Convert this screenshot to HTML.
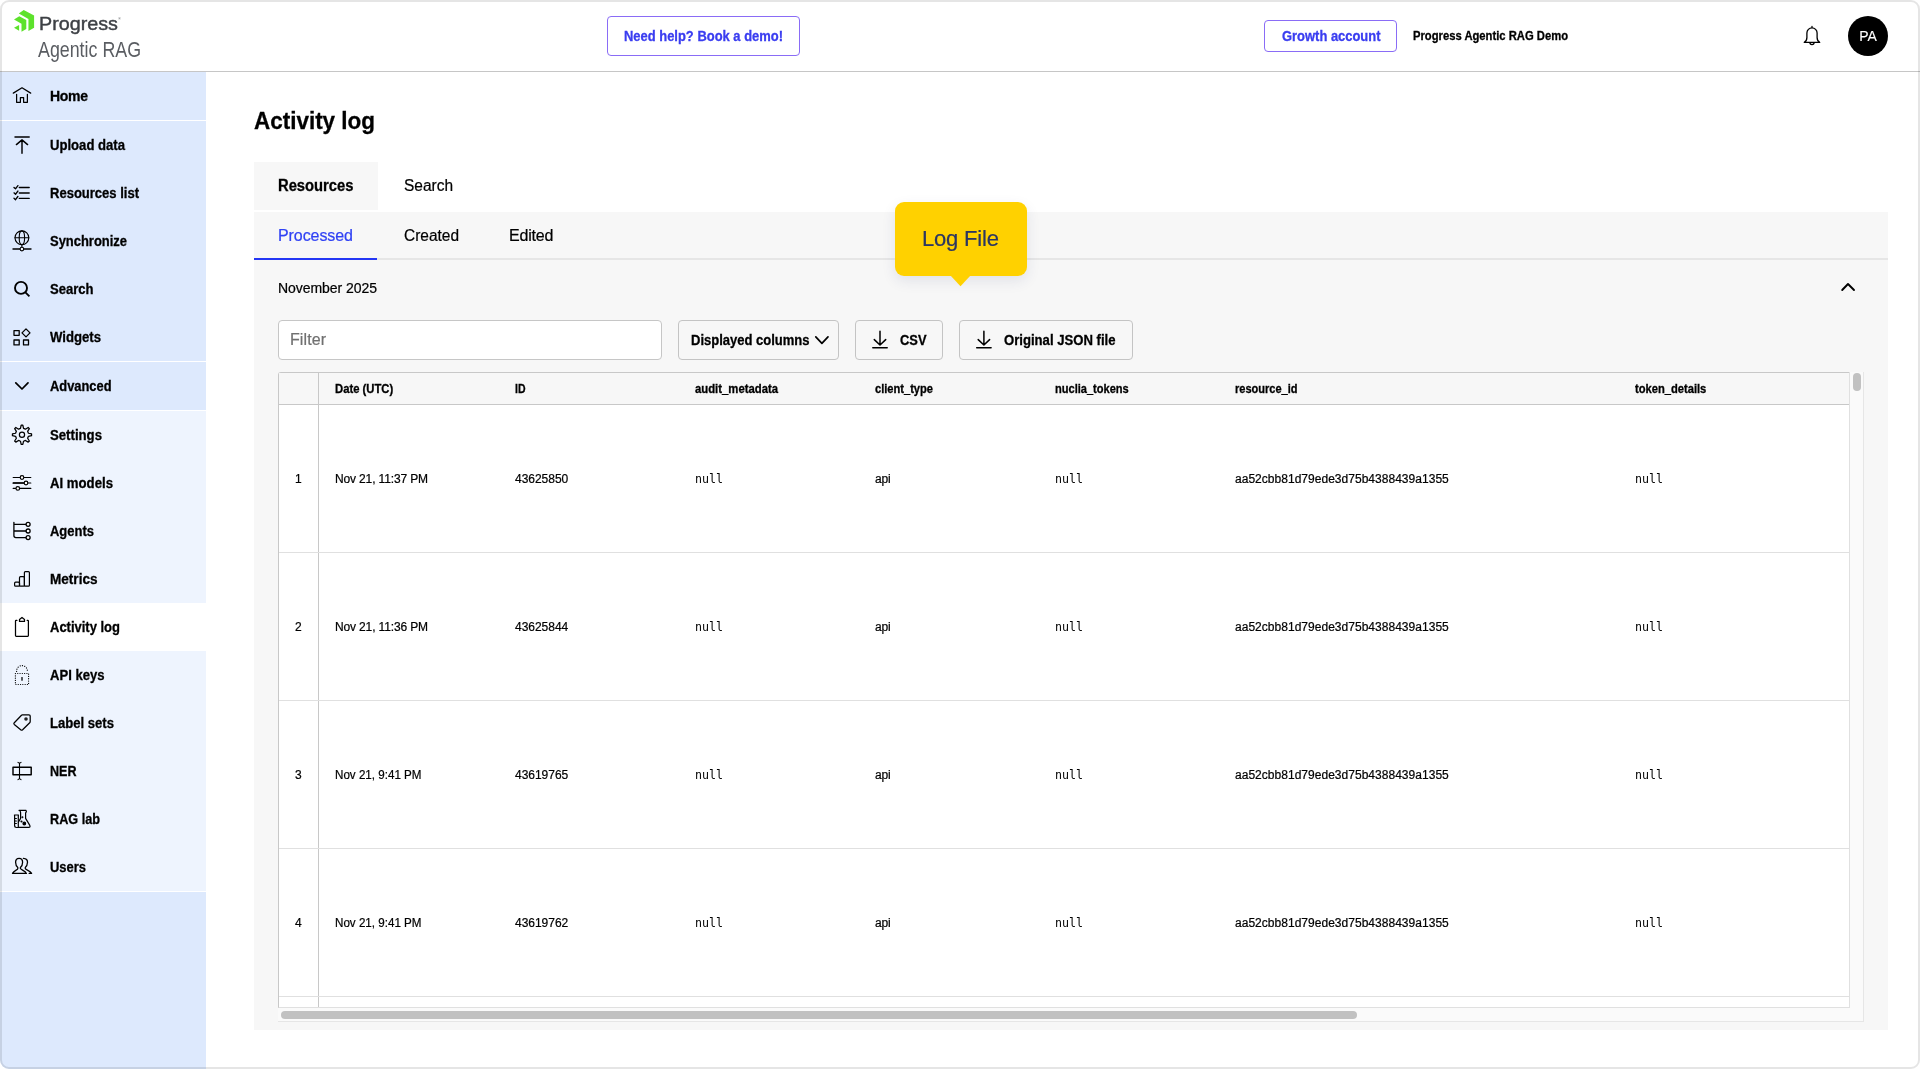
<!DOCTYPE html>
<html lang="en"><head><meta charset="utf-8"><title>Activity log</title>
<style>
*{box-sizing:border-box;margin:0;padding:0}
html,body{width:1920px;height:1069px;overflow:hidden;background:#fff}
body{position:relative;font-family:"Liberation Sans",sans-serif;color:#000}
.a{position:absolute}
#texts{position:absolute;left:0;top:0;width:1920px;height:1069px;will-change:transform}
.t{position:absolute;white-space:nowrap;line-height:20px;height:20px;transform-origin:0 50%}
#app{position:absolute;left:0;top:0;width:1920px;height:1069px;border-radius:9px;overflow:hidden;background:#fff}
#frame{position:absolute;left:0;top:0;width:1920px;height:1069px;border:2px solid rgba(0,0,0,.10);border-radius:9px;pointer-events:none}
#hdr{left:0;top:0;width:1920px;height:72px;background:#fff;border-bottom:1px solid #c6c6c6}
#side{left:0;top:72px;width:206px;height:997px;background:#dde9fd}
.si{position:absolute;left:0;width:206px;height:48px}
.ic{position:absolute;left:10px;width:24px;height:24px}
.btn{position:absolute;border:1px solid #c4c4c4;border-radius:4px}
svg{display:block;overflow:visible}

</style></head>
<body>
<div id="app">
<div id="hdr" class="a"></div>
<div class="a" style="left:607px;top:16px;width:193px;height:40px;border:1px solid #8a6cf6;border-radius:4px"></div>
<div class="a" style="left:1264px;top:20px;width:133px;height:32px;border:1px solid #8a6cf6;border-radius:4px"></div>
<div class="a" style="left:1848px;top:16px;width:40px;height:40px;border-radius:50%;background:#000"></div>
<div id="side" class="a">
  <div class="a" style="left:0;top:48px;width:206px;height:1px;background:#fff"></div>
  <div class="a" style="left:0;top:289px;width:206px;height:1px;background:#fff"></div>
  <div class="a" style="left:0;top:338px;width:206px;height:482px;background:#fff"></div>
  <div class="a" style="left:0;top:339px;width:206px;height:480px;background:#eef4fe"></div>
  <div class="a" style="left:0;top:531px;width:206px;height:48px;background:#fff"></div>
</div>
<!-- main -->
<div class="a" style="left:254px;top:162px;width:124px;height:48px;background:#f7f7f7"></div>
<div class="a" style="left:254px;top:212px;width:1634px;height:818px;background:#f7f7f7"></div>
<div class="a" style="left:254px;top:258px;width:1634px;height:2px;background:#e6e6e6"></div>
<div class="a" style="left:254px;top:258px;width:123px;height:2px;background:#2436f4"></div>
<!-- filter -->
<div class="a" style="left:278px;top:320px;width:384px;height:40px;background:#fff;border:1px solid #c6c6c6;border-radius:4px"></div>
<div class="btn" style="left:678px;top:320px;width:161px;height:40px"></div>
<div class="btn" style="left:855px;top:320px;width:88px;height:40px"></div>
<div class="btn" style="left:959px;top:320px;width:174px;height:40px"></div>
<!-- scroll container -->
<div class="a" style="left:278px;top:372px;width:1586px;height:650px;background:#fafafa;border-right:1px solid #e6e6e6;border-bottom:1px solid #e6e6e6"></div>
<div class="a" style="left:278px;top:372px;width:1572px;height:636px;background:#fff;border:1px solid #c8c8c8;border-radius:3px 0 0 0;border-bottom-color:#e0e0e0;border-right-color:#e0e0e0"></div>
<div class="a" style="left:279px;top:373px;width:1570px;height:31px;background:#f7f7f7"></div>
<div class="a" style="left:279px;top:404px;width:1570px;height:1px;background:#c8c8c8"></div>
<div class="a" style="left:318px;top:373px;width:1px;height:634px;background:#c8c8c8"></div>
<div class="a" style="left:279px;top:552px;width:1570px;height:1px;background:#e0e0e0"></div>
<div class="a" style="left:279px;top:700px;width:1570px;height:1px;background:#e0e0e0"></div>
<div class="a" style="left:279px;top:848px;width:1570px;height:1px;background:#e0e0e0"></div>
<div class="a" style="left:279px;top:996px;width:1570px;height:1px;background:#e0e0e0"></div>
<!-- scrollbars -->
<div class="a" style="left:1853px;top:373px;width:8px;height:18px;border-radius:4px;background:#c1c1c1"></div>
<div class="a" style="left:281px;top:1011px;width:1076px;height:8px;border-radius:4px;background:#c1c1c1"></div>
<!-- tooltip -->
<div class="a" style="left:895px;top:202px;width:132px;height:74px;border-radius:9px;background:#ffd100;box-shadow:0 5px 14px rgba(40,50,110,.10)"></div>
<svg class="a" style="left:950px;top:275px" width="22" height="12" viewBox="0 0 22 12"><path d="M0 0H21L10.5 11.2Z" fill="#ffd100"/></svg>
<svg class="a" style="left:0;top:0" width="1920" height="1069" viewBox="0 0 1920 1069">
<path fill="#5de22c" d="M18.8 13.4L23.7 9.9L34.1 15.6V27.85L28.45 30.9V18.9Z"/>
<path fill="#5de22c" d="M14 19.4L19.25 16.15L26.3 20.1V29.1L21.5 31.75V23.65Z"/>
<path fill="#5de22c" d="M14 27.85L19.1 25V30.8Z"/>
<path stroke="#000" fill="none" stroke-linecap="round" stroke-linejoin="round" stroke-width="1.3" d="M1812 26.4V27.9M1804.3 42.4C1806.3 41.2 1806.9 39.6 1806.9 37.5V33C1806.9 30.2 1809.2 27.9 1812 27.9S1817.1 30.2 1817.1 33V37.5C1817.1 39.6 1817.7 41.2 1819.7 42.4ZM1809.9 42.6A2.1 2.1 0 0 0 1814.1 42.6"/>
<path stroke="#000" fill="none" stroke-linecap="round" stroke-linejoin="round" stroke-width="1.25" stroke-linecap="butt" d="M13.3 93.1L22 87.8L30.7 93.1M16.6 94.3V102.3H20.4V97.6H23.6V102.3H27.4V94.3"/>
<path stroke="#000" fill="none" stroke-linecap="round" stroke-linejoin="round" stroke-width="1.45" d="M15 137H29.2M22 153.2V140M16.4 144.6L22 139.9L27.6 144.6"/>
<path stroke="#000" fill="none" stroke-linecap="round" stroke-linejoin="round" stroke-width="1.35" stroke-linecap="butt" d="M19.3 187.50H29.2M14 187.40L15.5 188.80L17.9 185.60"/>
<path stroke="#000" fill="none" stroke-linecap="round" stroke-linejoin="round" stroke-width="1.35" stroke-linecap="butt" d="M19.3 192.95H29.2M14 192.85L15.5 194.25L17.9 191.05"/>
<path stroke="#000" fill="none" stroke-linecap="round" stroke-linejoin="round" stroke-width="1.35" stroke-linecap="butt" d="M19.3 198.40H29.2M14 198.30L15.5 199.70L17.9 196.50"/>
<g stroke="#000" fill="none" stroke-linecap="round" stroke-linejoin="round" stroke-width="1.15"><circle cx="21.9" cy="237.7" r="6.9"/><ellipse cx="21.9" cy="237.7" rx="2.7" ry="6.9"/><path d="M15 237.7H28.8M21.9 244.6V246.8"/><path stroke-width="1.4" d="M13 249H20M23.8 249H31"/><circle cx="21.9" cy="249" r="1.8" fill="#f4f8ff"/></g>
<g stroke="#000" fill="none" stroke-linecap="round" stroke-linejoin="round" stroke-width="1.9"><circle cx="21" cy="287.9" r="6"/><path stroke-linecap="butt" d="M25.4 292.3L29.4 296.3"/></g>
<g stroke="#000" fill="none" stroke-linecap="round" stroke-linejoin="round" stroke-width="1.3" stroke-linejoin="miter"><rect x="14" y="330.6" width="5.2" height="4.7"/><rect x="14" y="340" width="5.2" height="4.9"/><rect x="23.5" y="340" width="5" height="4.9"/><path d="M26 328.9L30 332.9L26 336.9L22 332.9Z"/></g>
<path stroke="#000" fill="none" stroke-linecap="round" stroke-linejoin="round" stroke-width="1.75" stroke-linecap="butt" stroke-linejoin="miter" d="M15.8 382.9L22 389L28 382.9"/>
<path stroke="#000" fill="none" stroke-linecap="round" stroke-linejoin="round" stroke-width="1.25" d="M21.17 425.24 L22.83 425.24 L23.54 428.38 L25.45 429.17 L28.18 427.45 L29.35 428.62 L27.63 431.35 L28.42 433.26 L31.56 433.97 L31.56 435.63 L28.42 436.34 L27.63 438.25 L29.35 440.98 L28.18 442.15 L25.45 440.43 L23.54 441.22 L22.83 444.36 L21.17 444.36 L20.46 441.22 L18.55 440.43 L15.82 442.15 L14.65 440.98 L16.37 438.25 L15.58 436.34 L12.44 435.63 L12.44 433.97 L15.58 433.26 L16.37 431.35 L14.65 428.62 L15.82 427.45 L18.55 429.17 L20.46 428.38Z"/><circle stroke="#000" fill="none" stroke-linecap="round" stroke-linejoin="round" stroke-width="1.2" cx="22" cy="434.8" r="2.6"/>
<g stroke="#000" fill="none" stroke-linecap="round" stroke-linejoin="round" stroke-width="1.2"><path d="M13.2 477.5H19.9M24.1 477.5H30.8M13.2 483H23.9M28.1 483H30.8M13.2 488.4H15.7M19.9 488.4H30.8"/><path stroke-width="1.7" d="M13.4 483H23.5"/><circle cx="22" cy="477.5" r="1.8" fill="#fff"/><circle cx="26" cy="483" r="1.8" fill="#fff"/><circle cx="17.8" cy="488.4" r="1.8" fill="#fff"/></g>
<g stroke="#000" fill="none" stroke-linecap="round" stroke-linejoin="round" stroke-width="1.3"><path d="M13.9 522.3V535.6Q13.9 537.6 15.9 537.6H26M13.9 524.3H26M13.9 531H26"/><circle cx="28.1" cy="524.3" r="2" fill="#fff"/><circle cx="28.1" cy="531" r="2" fill="#fff"/><circle cx="28.1" cy="537.6" r="2" fill="#fff"/></g>
<g stroke="#000" fill="none" stroke-linecap="round" stroke-linejoin="round" stroke-width="1.2"><rect x="14.6" y="582.2" width="4.9" height="4" rx="1"/><rect x="19.5" y="576.7" width="4.9" height="9.5" rx="1"/><rect x="24.4" y="571.6" width="5" height="14.6" rx="1"/></g>
<g stroke="#000" fill="none" stroke-linecap="round" stroke-linejoin="round" stroke-width="1.25"><path d="M16.9 620.4H16.2Q15.5 620.4 15.5 621.1V635.6Q15.5 636.3 16.2 636.3H27.7Q28.4 636.3 28.4 635.6V621.1Q28.4 620.4 27.7 620.4H27.2"/><path d="M19.5 621.4V619.4L22 617.5L24.5 619.4V621.4Z"/></g>
<g stroke="#000" fill="none" stroke-linecap="round" stroke-linejoin="round" stroke-width="1.2" stroke-dasharray="0.1 2.2"><rect x="15.4" y="673.5" width="13.2" height="11"/><path d="M16.6 671.5V671A5.4 5.4 0 0 1 27.4 671V671.5"/></g><path stroke="#000" fill="none" stroke-linecap="round" stroke-linejoin="round" stroke-width="1.3" d="M22 677.6V680.2"/>
<path stroke="#000" fill="none" stroke-linecap="round" stroke-linejoin="round" stroke-width="1.25" d="M22.3 714.8H28.9Q30.2 714.8 30.2 716.1V721.6Q30.2 722.3 29.7 722.8L22.6 729.8Q21.7 730.6 20.7 729.8L14.3 724.4Q13.4 723.6 14.3 722.7L21.5 715.2Q21.9 714.8 22.3 714.8Z"/><circle cx="26" cy="719" r="1.8" fill="#222"/>
<g stroke="#000" fill="none" stroke-linecap="round" stroke-linejoin="round" stroke-width="1.45" stroke-linejoin="miter"><rect x="13" y="767.3" width="18.2" height="7.4"/><path stroke-width="1.1" d="M19.5 763.2V778.8M18 762.4L19.5 763.4L21 762.4M18 779.6L19.5 778.6L21 779.6"/></g>
<g stroke="#000" fill="none" stroke-linecap="round" stroke-linejoin="round" stroke-width="1.2"><path d="M14.4 815H18.5M14.6 815V825.6Q14.6 827.5 16.5 827.5H18.3V815M14.8 818.5H16.4M14.8 821H16.4M14.8 823.5H16.4"/><path d="M19 810.3H26Q27 811.5 25.6 813V818.4L29.8 825.4Q30.6 827.4 28.6 827.4H18.6M20 810.6L20.6 812.6V818.4L18.5 822"/><circle cx="24.3" cy="823.5" r="1.3" fill="#000"/><circle cx="21.5" cy="821.5" r=".5" fill="#000"/><circle cx="22.4" cy="817.3" r=".4" fill="#000"/></g>
<g stroke="#000" fill="none" stroke-linecap="round" stroke-linejoin="round" stroke-width="1.3"><path d="M19.1 858.3C16.9 858.3 15.6 860 15.6 862.3C15.6 864.8 16.5 866.4 17.8 867.4V868.6C17.6 870.2 14.2 870 12.5 873.4H26.4C25.2 870.6 21 870 20.4 868.6V867.4C21.7 866.4 22.6 864.8 22.6 862.3C22.6 860 21.3 858.3 19.1 858.3Z"/><path d="M23.4 858.3C26 858.5 27.6 860 27.5 862.3C27.4 864.8 26.6 866.4 25.3 867.4V868.6C25.9 870.2 30 870 31.6 873.4H29.2"/></g>
<path stroke="#000" fill="none" stroke-linecap="round" stroke-linejoin="round" stroke-width="1.9" stroke-linecap="butt" stroke-linejoin="miter" d="M1842.2 290L1848 284L1854 290"/>
<path stroke="#000" fill="none" stroke-linecap="round" stroke-linejoin="round" stroke-width="1.7" stroke-linecap="butt" stroke-linejoin="miter" d="M815.8 336.9L821.9 343.3L828 336.9"/>
<path stroke="#000" fill="none" stroke-linecap="round" stroke-linejoin="round" stroke-width="1.5" stroke-linecap="butt" stroke-linejoin="miter" d="M880 331.2V344.6M874.3 339.6L880 345L885.7 339.6M872.8 347.8H887.2"/>
<path stroke="#000" fill="none" stroke-linecap="round" stroke-linejoin="round" stroke-width="1.5" stroke-linecap="butt" stroke-linejoin="miter" d="M983.9 331.2V344.6M978.1999999999999 339.6L983.9 345L989.6 339.6M976.6999999999999 347.8H991.1"/>
</svg>
<div id="texts">
<header>
<span class="t" style='left:624px;top:26px;font-size:14px;font-weight:700;color:#3a3df0;-webkit-text-stroke:0.3px;transform:scaleX(0.9248);'>Need help? Book a demo!</span>
<span class="t" style='left:1282px;top:26px;font-size:14px;font-weight:700;color:#3a3df0;-webkit-text-stroke:0.3px;transform:scaleX(0.9243);'>Growth account</span>
<span class="t" style='left:1413px;top:26px;font-size:12px;font-weight:700;color:#000;-webkit-text-stroke:0.3px;transform:scaleX(0.9360);'>Progress Agentic RAG Demo</span>
<span class="t" style='left:1859.3px;top:26px;font-size:14px;font-weight:400;color:#fff;-webkit-text-stroke:0.1px;letter-spacing:-0.041px;'>PA</span>
<span class="t" style='left:118.2px;top:8.600000000000001px;font-size:3.4px;font-weight:400;color:#3d4045;-webkit-text-stroke:0;'>®</span>
<span class="t" style='left:39.3px;top:13.899999999999999px;font-size:18.2px;font-weight:400;color:#3d4045;-webkit-text-stroke:0.4px #3d4045;transform:scaleX(1.0854);'>Progress</span>
<span class="t" style='left:38px;top:40.0px;font-size:21.2px;font-weight:400;color:#5a5d62;-webkit-text-stroke:0;transform:scaleX(0.8409);'>Agentic RAG</span>
</header>
<nav>
<span class="t" style='left:50px;top:86px;font-size:14px;font-weight:700;color:#000;-webkit-text-stroke:0.3px;letter-spacing:-0.302px;'>Home</span>
<span class="t" style='left:50px;top:135px;font-size:14px;font-weight:700;color:#000;-webkit-text-stroke:0.3px;transform:scaleX(0.9360);'>Upload data</span>
<span class="t" style='left:50px;top:183px;font-size:14px;font-weight:700;color:#000;-webkit-text-stroke:0.3px;transform:scaleX(0.9298);'>Resources list</span>
<span class="t" style='left:50px;top:231px;font-size:14px;font-weight:700;color:#000;-webkit-text-stroke:0.3px;transform:scaleX(0.9249);'>Synchronize</span>
<span class="t" style='left:50px;top:279px;font-size:14px;font-weight:700;color:#000;-webkit-text-stroke:0.3px;transform:scaleX(0.9314);'>Search</span>
<span class="t" style='left:50px;top:327px;font-size:14px;font-weight:700;color:#000;-webkit-text-stroke:0.3px;transform:scaleX(0.9387);'>Widgets</span>
<span class="t" style='left:50px;top:376px;font-size:14px;font-weight:700;color:#000;-webkit-text-stroke:0.3px;transform:scaleX(0.9190);'>Advanced</span>
<span class="t" style='left:50px;top:425px;font-size:14px;font-weight:700;color:#000;-webkit-text-stroke:0.3px;transform:scaleX(0.9414);'>Settings</span>
<span class="t" style='left:50px;top:473px;font-size:14px;font-weight:700;color:#000;-webkit-text-stroke:0.3px;transform:scaleX(0.9416);'>AI models</span>
<span class="t" style='left:50px;top:521px;font-size:14px;font-weight:700;color:#000;-webkit-text-stroke:0.3px;transform:scaleX(0.9272);'>Agents</span>
<span class="t" style='left:50px;top:569px;font-size:14px;font-weight:700;color:#000;-webkit-text-stroke:0.3px;transform:scaleX(0.9688);'>Metrics</span>
<span class="t" style='left:50px;top:617px;font-size:14px;font-weight:700;color:#000;-webkit-text-stroke:0.3px;transform:scaleX(0.9275);'>Activity log</span>
<span class="t" style='left:50px;top:665px;font-size:14px;font-weight:700;color:#000;-webkit-text-stroke:0.3px;transform:scaleX(0.9336);'>API keys</span>
<span class="t" style='left:50px;top:713px;font-size:14px;font-weight:700;color:#000;-webkit-text-stroke:0.3px;transform:scaleX(0.9345);'>Label sets</span>
<span class="t" style='left:50px;top:761px;font-size:14px;font-weight:700;color:#000;-webkit-text-stroke:0.3px;transform:scaleX(0.8964);'>NER</span>
<span class="t" style='left:50px;top:809px;font-size:14px;font-weight:700;color:#000;-webkit-text-stroke:0.3px;transform:scaleX(0.9052);'>RAG lab</span>
<span class="t" style='left:50px;top:857px;font-size:14px;font-weight:700;color:#000;-webkit-text-stroke:0.3px;transform:scaleX(0.9249);'>Users</span>
</nav>
<main>
<span class="t" style='left:254px;top:111px;font-size:24px;font-weight:700;color:#000;-webkit-text-stroke:0.3px;transform:scaleX(0.9354);'>Activity log</span>
<span class="t" style='left:278px;top:176px;font-size:16px;font-weight:700;color:#000;-webkit-text-stroke:0.3px;transform:scaleX(0.9227);'>Resources</span>
<span class="t" style='left:404px;top:176px;font-size:16px;font-weight:400;color:#000;-webkit-text-stroke:0.22px;transform:scaleX(0.9664);'>Search</span>
<span class="t" style='left:278px;top:226px;font-size:16px;font-weight:400;color:#3042f4;-webkit-text-stroke:0.22px;letter-spacing:-0.074px;'>Processed</span>
<span class="t" style='left:404px;top:226px;font-size:16px;font-weight:400;color:#000;-webkit-text-stroke:0.22px;transform:scaleX(0.9662);'>Created</span>
<span class="t" style='left:509px;top:226px;font-size:16px;font-weight:400;color:#000;-webkit-text-stroke:0.22px;letter-spacing:-0.175px;'>Edited</span>
<span class="t" style='left:278px;top:278px;font-size:14px;font-weight:400;color:#000;-webkit-text-stroke:0.22px;letter-spacing:-0.052px;'>November 2025</span>
<span class="t" style='left:290px;top:330px;font-size:16px;font-weight:400;color:#707070;-webkit-text-stroke:0.22px;letter-spacing:0.087px;'>Filter</span>
<span class="t" style='left:691px;top:330px;font-size:14px;font-weight:700;color:#000;-webkit-text-stroke:0.3px;transform:scaleX(0.9287);'>Displayed columns</span>
<span class="t" style='left:900px;top:330px;font-size:14px;font-weight:700;color:#000;-webkit-text-stroke:0.3px;transform:scaleX(0.9202);'>CSV</span>
<span class="t" style='left:1004px;top:330px;font-size:14px;font-weight:700;color:#000;-webkit-text-stroke:0.3px;transform:scaleX(0.9367);'>Original JSON file</span>
<span class="t" style='left:922px;top:228.75px;font-size:22px;font-weight:400;color:#2b3662;-webkit-text-stroke:0.22px;letter-spacing:-0.183px;'>Log File</span>
</main>
<section>
<span class="t" style='left:335px;top:378.5px;font-size:12px;font-weight:700;color:#000;-webkit-text-stroke:0.3px;transform:scaleX(0.9395);'>Date (UTC)</span>
<span class="t" style='left:515px;top:378.5px;font-size:12px;font-weight:700;color:#000;-webkit-text-stroke:0.3px;transform:scaleX(0.8750);'>ID</span>
<span class="t" style='left:695px;top:378.5px;font-size:12px;font-weight:700;color:#000;-webkit-text-stroke:0.3px;transform:scaleX(0.9428);'>audit_metadata</span>
<span class="t" style='left:875px;top:378.5px;font-size:12px;font-weight:700;color:#000;-webkit-text-stroke:0.3px;transform:scaleX(0.9250);'>client_type</span>
<span class="t" style='left:1055px;top:378.5px;font-size:12px;font-weight:700;color:#000;-webkit-text-stroke:0.3px;transform:scaleX(0.9215);'>nuclia_tokens</span>
<span class="t" style='left:1235px;top:378.5px;font-size:12px;font-weight:700;color:#000;-webkit-text-stroke:0.3px;transform:scaleX(0.9185);'>resource_id</span>
<span class="t" style='left:1635px;top:378.5px;font-size:12px;font-weight:700;color:#000;-webkit-text-stroke:0.3px;transform:scaleX(0.9296);'>token_details</span>
<span class="t" style='left:295px;top:468.5px;font-size:12px;font-weight:400;color:#000;-webkit-text-stroke:0.22px;'>1</span>
<span class="t" style='left:335px;top:468.5px;font-size:12px;font-weight:400;color:#000;-webkit-text-stroke:0.22px;letter-spacing:-0.145px;'>Nov 21, 11:37 PM</span>
<span class="t" style='left:515px;top:468.5px;font-size:12px;font-weight:400;color:#000;-webkit-text-stroke:0.22px;letter-spacing:-0.020px;'>43625850</span>
<span class="t" style='left:695px;top:469.0px;font-size:12px;font-weight:400;color:#000;font-family:"DejaVu Sans Mono", "Liberation Mono", monospace;transform:scaleX(0.9686);'>null</span>
<span class="t" style='left:875px;top:468.5px;font-size:12px;font-weight:400;color:#000;-webkit-text-stroke:0.22px;letter-spacing:-0.133px;'>api</span>
<span class="t" style='left:1055px;top:469.0px;font-size:12px;font-weight:400;color:#000;font-family:"DejaVu Sans Mono", "Liberation Mono", monospace;transform:scaleX(0.9686);'>null</span>
<span class="t" style='left:1235px;top:468.5px;font-size:12px;font-weight:400;color:#000;-webkit-text-stroke:0.22px;letter-spacing:0.028px;'>aa52cbb81d79ede3d75b4388439a1355</span>
<span class="t" style='left:1635px;top:469.0px;font-size:12px;font-weight:400;color:#000;font-family:"DejaVu Sans Mono", "Liberation Mono", monospace;transform:scaleX(0.9686);'>null</span>
<span class="t" style='left:295px;top:616.5px;font-size:12px;font-weight:400;color:#000;-webkit-text-stroke:0.22px;'>2</span>
<span class="t" style='left:335px;top:616.5px;font-size:12px;font-weight:400;color:#000;-webkit-text-stroke:0.22px;letter-spacing:-0.145px;'>Nov 21, 11:36 PM</span>
<span class="t" style='left:515px;top:616.5px;font-size:12px;font-weight:400;color:#000;-webkit-text-stroke:0.22px;letter-spacing:-0.020px;'>43625844</span>
<span class="t" style='left:695px;top:617.0px;font-size:12px;font-weight:400;color:#000;font-family:"DejaVu Sans Mono", "Liberation Mono", monospace;transform:scaleX(0.9686);'>null</span>
<span class="t" style='left:875px;top:616.5px;font-size:12px;font-weight:400;color:#000;-webkit-text-stroke:0.22px;letter-spacing:-0.133px;'>api</span>
<span class="t" style='left:1055px;top:617.0px;font-size:12px;font-weight:400;color:#000;font-family:"DejaVu Sans Mono", "Liberation Mono", monospace;transform:scaleX(0.9686);'>null</span>
<span class="t" style='left:1235px;top:616.5px;font-size:12px;font-weight:400;color:#000;-webkit-text-stroke:0.22px;letter-spacing:0.028px;'>aa52cbb81d79ede3d75b4388439a1355</span>
<span class="t" style='left:1635px;top:617.0px;font-size:12px;font-weight:400;color:#000;font-family:"DejaVu Sans Mono", "Liberation Mono", monospace;transform:scaleX(0.9686);'>null</span>
<span class="t" style='left:295px;top:764.5px;font-size:12px;font-weight:400;color:#000;-webkit-text-stroke:0.22px;'>3</span>
<span class="t" style='left:335px;top:764.5px;font-size:12px;font-weight:400;color:#000;-webkit-text-stroke:0.22px;transform:scaleX(0.9677);'>Nov 21, 9:41 PM</span>
<span class="t" style='left:515px;top:764.5px;font-size:12px;font-weight:400;color:#000;-webkit-text-stroke:0.22px;letter-spacing:-0.020px;'>43619765</span>
<span class="t" style='left:695px;top:765.0px;font-size:12px;font-weight:400;color:#000;font-family:"DejaVu Sans Mono", "Liberation Mono", monospace;transform:scaleX(0.9686);'>null</span>
<span class="t" style='left:875px;top:764.5px;font-size:12px;font-weight:400;color:#000;-webkit-text-stroke:0.22px;letter-spacing:-0.133px;'>api</span>
<span class="t" style='left:1055px;top:765.0px;font-size:12px;font-weight:400;color:#000;font-family:"DejaVu Sans Mono", "Liberation Mono", monospace;transform:scaleX(0.9686);'>null</span>
<span class="t" style='left:1235px;top:764.5px;font-size:12px;font-weight:400;color:#000;-webkit-text-stroke:0.22px;letter-spacing:0.028px;'>aa52cbb81d79ede3d75b4388439a1355</span>
<span class="t" style='left:1635px;top:765.0px;font-size:12px;font-weight:400;color:#000;font-family:"DejaVu Sans Mono", "Liberation Mono", monospace;transform:scaleX(0.9686);'>null</span>
<span class="t" style='left:295px;top:912.5px;font-size:12px;font-weight:400;color:#000;-webkit-text-stroke:0.22px;'>4</span>
<span class="t" style='left:335px;top:912.5px;font-size:12px;font-weight:400;color:#000;-webkit-text-stroke:0.22px;transform:scaleX(0.9677);'>Nov 21, 9:41 PM</span>
<span class="t" style='left:515px;top:912.5px;font-size:12px;font-weight:400;color:#000;-webkit-text-stroke:0.22px;letter-spacing:-0.020px;'>43619762</span>
<span class="t" style='left:695px;top:913.0px;font-size:12px;font-weight:400;color:#000;font-family:"DejaVu Sans Mono", "Liberation Mono", monospace;transform:scaleX(0.9686);'>null</span>
<span class="t" style='left:875px;top:912.5px;font-size:12px;font-weight:400;color:#000;-webkit-text-stroke:0.22px;letter-spacing:-0.133px;'>api</span>
<span class="t" style='left:1055px;top:913.0px;font-size:12px;font-weight:400;color:#000;font-family:"DejaVu Sans Mono", "Liberation Mono", monospace;transform:scaleX(0.9686);'>null</span>
<span class="t" style='left:1235px;top:912.5px;font-size:12px;font-weight:400;color:#000;-webkit-text-stroke:0.22px;letter-spacing:0.028px;'>aa52cbb81d79ede3d75b4388439a1355</span>
<span class="t" style='left:1635px;top:913.0px;font-size:12px;font-weight:400;color:#000;font-family:"DejaVu Sans Mono", "Liberation Mono", monospace;transform:scaleX(0.9686);'>null</span>
</section>
</div>
</div>
<div id="frame"></div>
</body></html>
